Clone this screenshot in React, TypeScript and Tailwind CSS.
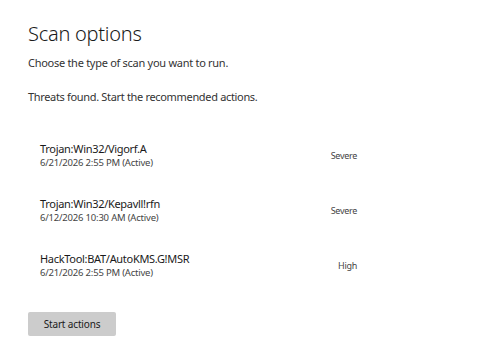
import React from "react";

const threats = [
  { name: "Trojan:Win32/Vigorf.A", date: "6/21/2026 2:55 PM (Active)", level: "Severe" },
  { name: "Trojan:Win32/Kepavll!rfn", date: "6/12/2026 10:30 AM (Active)", level: "Severe" },
  { name: "HackTool:BAT/AutoKMS.G!MSR", date: "6/21/2026 2:55 PM (Active)", level: "High" },
];

export default function App() {
  return (
    <div
      className="w-[500px] h-[339px] bg-white overflow-hidden pl-[28px] pt-[18px] text-[#1a1a1a]"
      style={{ fontFamily: '"Noto Sans", "Open Sans", sans-serif' }}
    >
      <h1 className="text-[20px] leading-[32px] font-light tracking-[-0.25px] text-[#1a1a1a]">Scan options</h1>
      <p className="mt-[5px] text-[11px] leading-[16px] tracking-[-0.28px] text-[#333]">Choose the type of scan you want to run.</p>
      <p className="mt-[18px] text-[11px] leading-[16px] tracking-[-0.33px] text-[#333]">Threats found. Start the recommended actions.</p>
      <div className="mt-[36px] w-[329px] flex flex-col gap-[26px]">
        {threats.map((t) => (
          <div key={t.name} className="flex items-center justify-between pl-[12px] h-[29px]">
            <div className="flex flex-col">
              <span className="text-[11px] leading-[15px] tracking-[-0.3px] text-[#1a1a1a]">{t.name}</span>
              <span className="text-[9.5px] leading-[14px] tracking-[-0.2px] text-[#444]">{t.date}</span>
            </div>
            <span className="text-[9px] tracking-[-0.3px] text-[#444]">{t.level}</span>
          </div>
        ))}
      </div>
      <button className="mt-[32px] w-[88px] h-[24px] bg-[#cccccc] rounded-[2px] text-[10px] tracking-[-0.15px] text-[#1a1a1a]">
        Start actions
      </button>
    </div>
  );
}
